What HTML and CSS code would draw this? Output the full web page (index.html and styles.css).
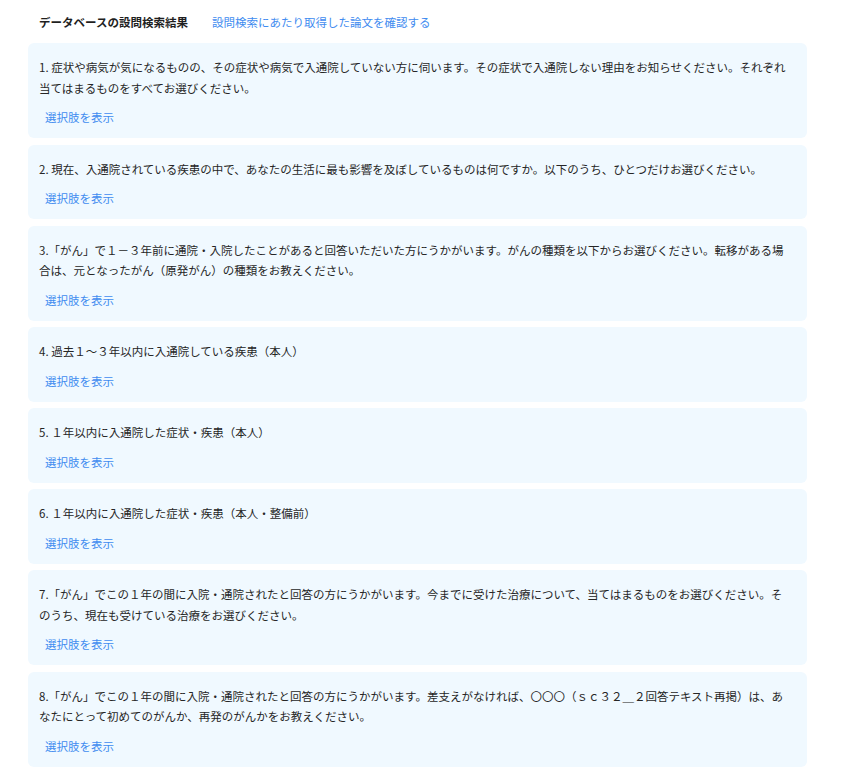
FILE: index.html
```html
<!DOCTYPE html>
<html lang="ja">
<head>
<meta charset="utf-8">
<link rel="stylesheet" href="styles.css">
</head>
<body>
<div class="page">
  <div class="header">
    <span class="title">データベースの設問検索結果</span>
    <a class="header-link">設問検索にあたり取得した論文を確認する</a>
  </div>
  <div class="list">
    <div class="card">
      <p class="q">1. 症状や病気が気になるものの、その症状や病気で入通院していない方に伺います。その症状で入通院しない理由をお知らせください。それぞれ当てはまるものをすべてお選びください。</p>
      <a class="show">選択肢を表示</a>
    </div>
    <div class="card">
      <p class="q">2. 現在、入通院されている疾患の中で、あなたの生活に最も影響を及ぼしているものは何ですか。以下のうち、ひとつだけお選びください。</p>
      <a class="show">選択肢を表示</a>
    </div>
    <div class="card">
      <p class="q">3.「がん」で１－３年前に通院・入院したことがあると回答いただいた方にうかがいます。がんの種類を以下からお選びください。転移がある場合は、元となったがん（原発がん）の種類をお教えください。</p>
      <a class="show">選択肢を表示</a>
    </div>
    <div class="card">
      <p class="q">4. 過去１～３年以内に入通院している疾患（本人）</p>
      <a class="show">選択肢を表示</a>
    </div>
    <div class="card">
      <p class="q">5. １年以内に入通院した症状・疾患（本人）</p>
      <a class="show">選択肢を表示</a>
    </div>
    <div class="card">
      <p class="q">6. １年以内に入通院した症状・疾患（本人・整備前）</p>
      <a class="show">選択肢を表示</a>
    </div>
    <div class="card">
      <p class="q">7.「がん」でこの１年の間に入院・通院されたと回答の方にうかがいます。今までに受けた治療について、当てはまるものをお選びください。そのうち、現在も受けている治療をお選びください。</p>
      <a class="show">選択肢を表示</a>
    </div>
    <div class="card">
      <p class="q">8.「がん」でこの１年の間に入院・通院されたと回答の方にうかがいます。差支えがなければ、〇〇〇（ｓｃ３２＿２回答テキスト再掲）は、あなたにとって初めてのがんか、再発のがんかをお教えください。</p>
      <a class="show">選択肢を表示</a>
    </div>
  </div>
</div>
</body>
</html>
```

FILE: styles.css
```css
* { box-sizing: border-box; }
html, body { margin: 0; padding: 0; background: #ffffff; }
body {
  font-family: "Noto Sans CJK JP", "Noto Sans", sans-serif;
  font-size: 11.5px;
  color: #262626;
}
.page {
  width: 807px;
  padding: 12px 0 0 28px;
}
.header {
  display: flex;
  align-items: center;
  gap: 24px;
  height: 20px;
  padding-left: 11px;
  margin-bottom: 11px;
  line-height: 20px;
}
.title {
  font-weight: 700;
  color: #1f1f1f;
}
.header-link {
  color: #3f8cf0;
  cursor: pointer;
}
.list {
  display: flex;
  flex-direction: column;
  gap: 6.5px;
}
.card {
  background: #f0f9ff;
  border-radius: 6px;
  padding: 14px 16px 11px 11px;
}
.q {
  margin: 0 0 9px 0;
  line-height: 20.5px;
}
.show {
  display: inline-block;
  padding: 0 6px;
  height: 20px;
  line-height: 20px;
  color: #3f8cf0;
  cursor: pointer;
}
```
